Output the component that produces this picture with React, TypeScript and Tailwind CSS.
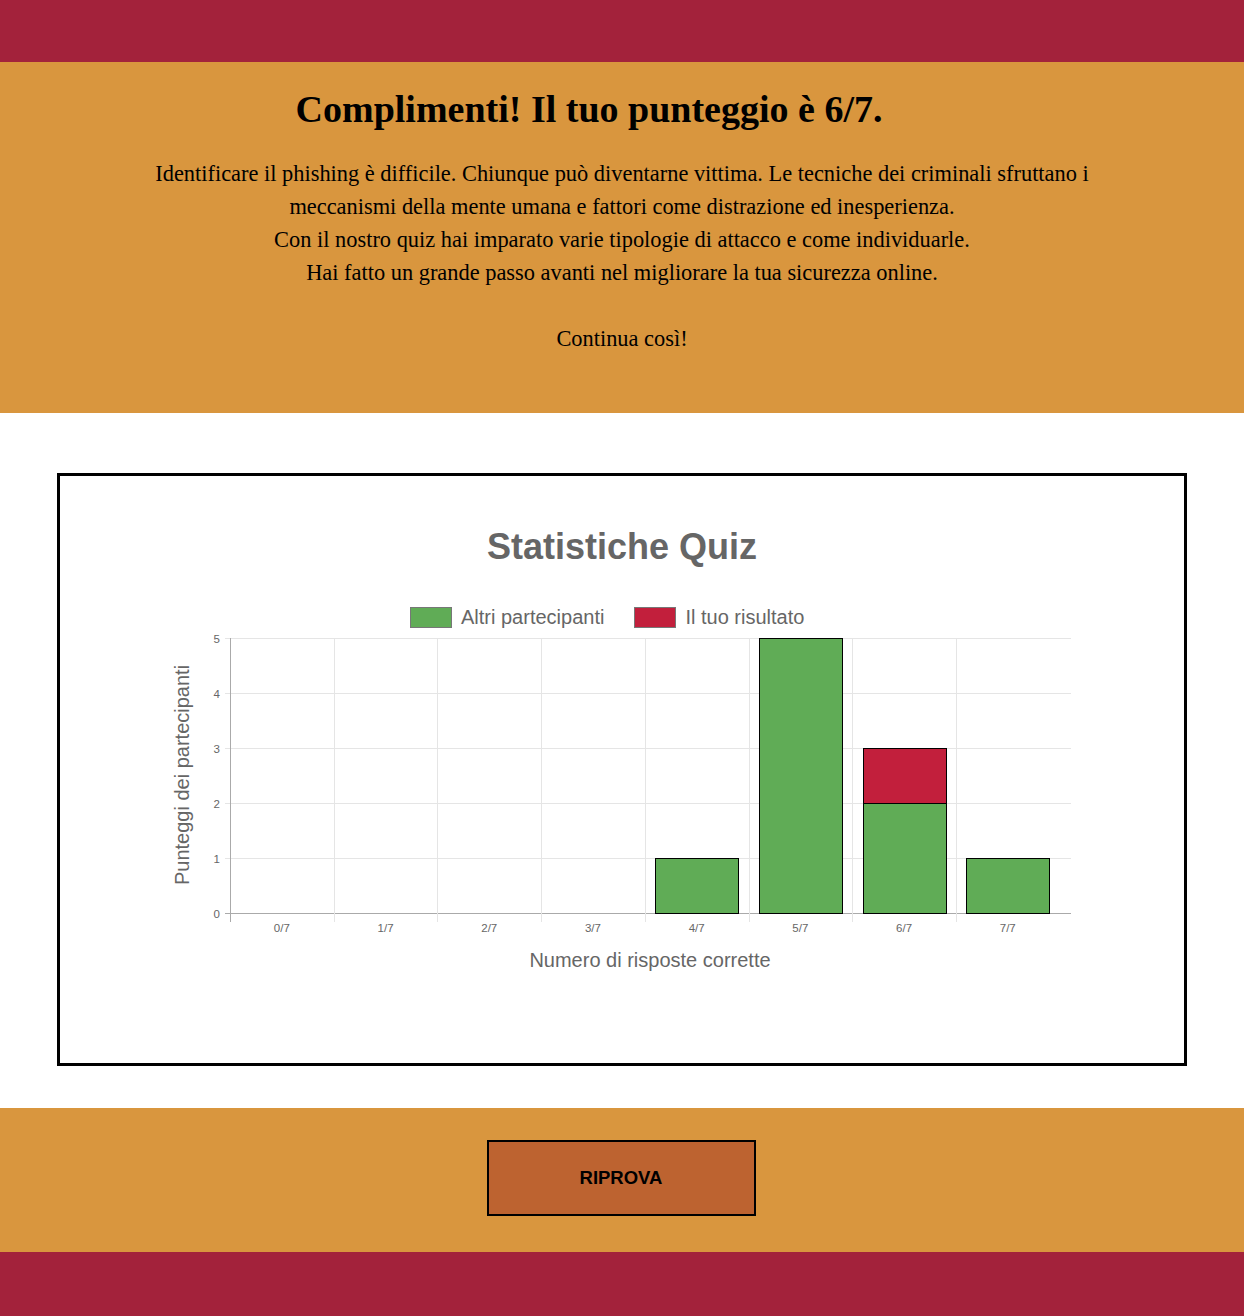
import React from "react";

const serif = { fontFamily: '"Liberation Serif", "Times New Roman", serif' };
const sans = '"Liberation Sans", Arial, sans-serif';

const PLOT_LEFT = 230;
const PLOT_RIGHT = 1071;
const PLOT_TOP = 638;
const PLOT_BOTTOM = 913;
const UNIT = (PLOT_BOTTOM - PLOT_TOP) / 5;
const CAT = 103.7;
const BAR_W = 83;

const labels = ["0/7", "1/7", "2/7", "3/7", "4/7", "5/7", "6/7", "7/7"];
const others = [0, 0, 0, 0, 1, 5, 2, 1];
const mine = [0, 0, 0, 0, 0, 0, 1, 0];

const GREEN = "#60ac56";
const RED = "#c21f3c";

function Chart() {
  return (
    <svg width={1123} height={360} className="block">
      <g transform="translate(-60,-628)" fontFamily={sans}>
        {/* horizontal grid */}
        {[0, 1, 2, 3, 4, 5].map((v) => {
          const y = PLOT_BOTTOM - v * UNIT + 0.5;
          return (
            <g key={v}>
              <line x1={225} x2={PLOT_RIGHT} y1={y} y2={y} stroke={v === 0 ? "#aaa" : "#e5e5e5"} strokeWidth={1} />
              <text x={220} y={y + 4} fontSize={11.5} fill="#666" textAnchor="end">{v}</text>
            </g>
          );
        })}
        {/* vertical grid */}
        {Array.from({ length: 8 }).map((_, i) => {
          const x = Math.round(PLOT_LEFT + i * CAT) + 0.5;
          return (
            <line key={i} x1={x} x2={x} y1={PLOT_TOP} y2={922} stroke={i === 0 ? "#aaa" : "#e5e5e5"} strokeWidth={1} />
          );
        })}
        {/* bars */}
        {labels.map((l, i) => {
          const cx = PLOT_LEFT + CAT * (i + 0.5);
          const x = Math.round(cx - BAR_W / 2) + 0.5;
          const gh = others[i] * UNIT;
          const rh = mine[i] * UNIT;
          return (
            <g key={l}>
              {gh > 0 && (
                <rect x={x} y={PLOT_BOTTOM - gh + 0.5} width={BAR_W} height={gh} fill={GREEN} stroke="#000" strokeWidth={1} />
              )}
              {rh > 0 && (
                <rect x={x} y={PLOT_BOTTOM - gh - rh + 0.5} width={BAR_W} height={rh} fill={RED} stroke="#000" strokeWidth={1} />
              )}
              <text x={cx} y={932} fontSize={11.5} fill="#666" textAnchor="middle">{l}</text>
            </g>
          );
        })}
        {/* axis titles */}
        <text x={650} y={967} fontSize={20} fill="#666" textAnchor="middle">Numero di risposte corrette</text>
        <text
          x={0}
          y={0}
          fontSize={20}
          fill="#666"
          textAnchor="middle"
          transform="translate(189,775) rotate(-90)"
        >
          Punteggi dei partecipanti
        </text>
      </g>
    </svg>
  );
}

export default function App() {
  return (
    <div className="w-full min-h-[1316px] bg-white">
      <div className="h-[62px] bg-[#a3223b]" />

      {/* results header */}
      <section className="h-[351px] bg-[#d9963e] flex flex-col items-center text-black" style={serif}>
        <h1 className="mt-[25px] pr-[66px] text-[38px] leading-[44px] font-bold">
          Complimenti! Il tuo punteggio è 6/7.
        </h1>
        <p className="mt-[26px] max-w-[960px] text-center text-[22.4px] leading-[33px]">
          Identificare il phishing è difficile. Chiunque può diventarne vittima. Le tecniche dei criminali sfruttano i
          meccanismi della mente umana e fattori come distrazione ed inesperienza.
          <br />
          Con il nostro quiz hai imparato varie tipologie di attacco e come individuarle.
          <br />
          Hai fatto un grande passo avanti nel migliorare la tua sicurezza online.
          <br />
          <br />
          Continua così!
        </p>
      </section>

      {/* stats */}
      <section className="pt-[60px] pb-[42px] px-[57px]">
        <div className="h-[593px] border-[3px] border-black flex flex-col items-center" style={{ fontFamily: sans }}>
          <h2 className="mt-[51px] text-[36px] leading-[40px] font-bold text-[#666]">Statistiche Quiz</h2>
          <div className="mt-[39px] h-[22px] flex items-center gap-[9px] text-[20px] leading-[22px] text-[#666] self-start ml-[350px]">
            <span className="w-[42px] h-[21px] bg-[#60ac56] border border-[#777]" />
            <span>Altri partecipanti</span>
            <span className="ml-[21px] w-[42px] h-[21px] bg-[#c21f3c] border border-[#777]" />
            <span>Il tuo risultato</span>
          </div>
          <div className="self-start">
            <Chart />
          </div>
        </div>
      </section>

      {/* retry */}
      <section className="h-[144px] bg-[#d9963e] flex items-start justify-center pt-[32px]">
        <button
          className="mr-[2px] w-[269px] h-[76px] border-2 border-black bg-[#bd6330] text-black text-[18.5px] font-bold"
          style={{ fontFamily: sans }}
        >
          RIPROVA
        </button>
      </section>

      <div className="h-[64px] bg-[#a3223b]" />
    </div>
  );
}
